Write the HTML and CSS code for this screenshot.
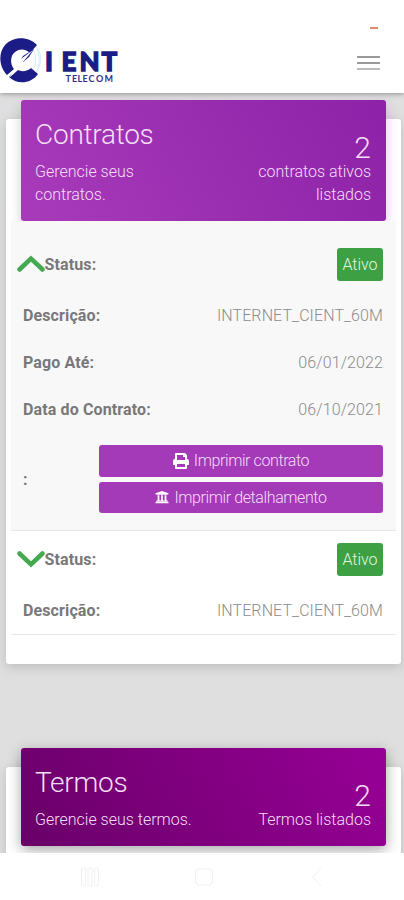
FILE: index.html
```
<!DOCTYPE html>
<html lang="pt-BR">
<head>
<meta charset="utf-8">
<meta name="viewport" content="width=device-width, initial-scale=1">
<title>Cient Telecom</title>
<link rel="stylesheet" href="styles.css">
</head>
<body>
<header class="topbar">
  <svg class="logo" width="122" height="50" viewBox="0 0 122 50" role="img" aria-label="Cient Telecom">
    <g fill="none" stroke="#d9edf5" stroke-width="1">
      <path d="M36 8Q43 21 35 38"/><path d="M38 11Q44 21 37 34"/><path d="M33 12Q39 22 32 34"/>
    </g>
    <path fill="#1c1c86" d="M37 7C29-2 13-2 5 7C-2 15-1 29 7 37L14 31C10 26 10 18 15 14C20 10 26 11 30 15Z"/>
    <path fill="#1c1c86" d="M9 39C17 47 31 46 38 36L31 30C27 34 20 34 16 31Z"/>
    <path fill="#1c1c86" d="M34 11L23 18L18 26L22 25L29 19Z"/>
    <path fill="#fff" d="M33 12L23 24L26 25L9 40L17 27L14 26Z"/>
    <text class="logo-name" y="32.500" x="45 61.500 79.500 101.500">IENT</text>
    <text class="logo-sub" y="44" x="65.500 72 77.500 82.500 88.500 96 104.500">TELECOM</text>
  </svg>
  <div class="top-actions">
    <span class="notice"></span>
    <div class="menu"><i></i><i></i><i></i></div>
  </div>
</header>
<main class="content">
  <section class="card">
    <div class="card-header">
      <h1>Contratos</h1>
      <div class="summary">
        <p>Gerencie seus<br>contratos.</p>
        <p class="count"><b>2</b>contratos ativos<br>listados</p>
      </div>
    </div>
    <div class="contract open">
      <div class="row status">
        <svg class="chevron" width="28" height="18" viewBox="0 0 28 18"><path d="M2.500 14.500L14 3.500L25.500 14.500"/></svg>
        <strong>Status:</strong><span class="badge">Ativo</span>
      </div>
      <div class="row"><strong>Descrição:</strong><span class="value plan">INTERNET_CIENT_60M</span></div>
      <div class="row"><strong>Pago Até:</strong><span class="value">06/01/2022</span></div>
      <div class="row"><strong>Data do Contrato:</strong><span class="value">06/10/2021</span></div>
      <div class="row actions">
        <strong>:</strong>
        <div class="buttons">
          <a class="button"><svg width="16" height="16" viewBox="0 0 512 512"><path d="M448 192V77.300c0-8.500-3.400-16.600-9.400-22.600L393.400 9.400c-6-6-14.100-9.400-22.600-9.400H96C78.300 0 64 14.300 64 32v160c-35.300 0-64 28.700-64 64v112c0 8.800 7.200 16 16 16h48v96c0 17.700 14.300 32 32 32h320c17.700 0 32-14.300 32-32v-96h48c8.800 0 16-7.200 16-16V256c0-35.300-28.700-64-64-64zm-64 256H128v-96h256v96zm0-224H128V64h192v48c0 8.800 7.200 16 16 16h48v96z"/></svg><span>Imprimir contrato</span></a>
          <a class="button"><svg width="14" height="14" viewBox="0 0 512 512"><path d="M496 128v16a8 8 0 0 1-8 8h-24v12c0 6.600-5.400 12-12 12H60c-6.600 0-12-5.400-12-12v-12H24a8 8 0 0 1-8-8v-16a8 8 0 0 1 5-7.400l232-88a8 8 0 0 1 6 0l232 88a8 8 0 0 1 5 7.400zm-24 304H40c-13.300 0-24 10.700-24 24v16a8 8 0 0 0 8 8h464a8 8 0 0 0 8-8v-16c0-13.300-10.700-24-24-24zM96 192v192H60c-6.600 0-12 5.400-12 12v20h416v-20c0-6.600-5.400-12-12-12h-36V192h-64v192h-64V192h-64v192h-64V192z"/></svg><span>Imprimir detalhamento</span></a>
        </div>
      </div>
    </div>
    <div class="contract">
      <div class="row status">
        <svg class="chevron" width="28" height="18" viewBox="0 0 28 18"><path d="M2.500 3.500L14 14.500L25.500 3.500"/></svg>
        <strong>Status:</strong><span class="badge">Ativo</span>
      </div>
      <div class="row"><strong>Descrição:</strong><span class="value plan">INTERNET_CIENT_60M</span></div>
    </div>
  </section>
  <section class="card terms">
    <div class="card-header">
      <h1>Termos</h1>
      <div class="summary">
        <p>Gerencie seus termos.</p>
        <p class="count"><b>2</b>Termos listados</p>
      </div>
    </div>
  </section>
</main>
<nav class="system-nav">
  <svg width="20" height="20" viewBox="0 0 20 20"><rect x="1.500" y="1" width="4" height="18" rx="1"/><rect x="8" y="1" width="4" height="18" rx="1"/><rect x="14.500" y="1" width="4" height="18" rx="2"/></svg>
  <svg width="20" height="20" viewBox="0 0 20 20"><rect x="1.500" y="2" width="17" height="16" rx="4"/></svg>
  <svg width="20" height="20" viewBox="0 0 20 20"><path d="M13 1L5 10L13 19"/></svg>
</nav>
</body>
</html>
```
FILE: styles.css
```
* { box-sizing: border-box; }
body {
  margin: 0;
  height: 900px;
  display: flex;
  flex-direction: column;
  overflow: hidden;
  background: #fff;
  color: #707070;
  font: 300 16px/23px Roboto, sans-serif;
}
.topbar {
  height: 93px;
  flex: none;
  display: flex;
  justify-content: space-between;
  padding: 26px 24px 0 0;
  background: #fff;
  box-shadow: 0 1px 5px rgba(0, 0, 0, .35);
  position: relative;
  z-index: 1;
}
.logo { margin-top: 12px; }
.logo-name { font: 900 26px Lato, sans-serif; fill: #1c1c86; stroke: #1c1c86; stroke-width: 1.3px; }
.logo-sub { font: 700 9px Lato, sans-serif; fill: #30308e; }
.top-actions { display: flex; flex-direction: column; align-items: flex-end; }
.notice { width: 8px; height: 2px; margin: 1px 2px 0 0; background: #e58a6b; }
.menu { display: grid; gap: 4px; width: 23px; margin-top: 27px; }
.menu i { height: 2px; background: #999; }
.menu i:last-child { background: #bbb; }
.content {
  height: 760px;
  flex: none;
  overflow: hidden;
  padding: 26px 3.500px 0 6px;
  background: #dfdfdf;
}
.card {
  height: 545px;
  padding: 0 5px;
  background: #fff;
  border-radius: 3px;
  box-shadow: 0 3px 12px rgba(0, 0, 0, .16);
  display: flow-root;
}
.card-header {
  height: 120.500px;
  margin: -19px 9.500px 0;
  padding: 19px 15px 0 14.500px;
  color: #f4dff7;
  background: linear-gradient(60deg, #a83bba, #8d22a8);
  border-radius: 3px;
  box-shadow: 0 5px 12px rgba(156, 39, 176, .28);
}
h1 { margin: 0; font-weight: 300; font-size: 28px; line-height: 32px; letter-spacing: -.25px; }
.summary { display: flex; justify-content: space-between; align-items: flex-end; height: 55px; }
.summary p { margin: 0; }
.count { text-align: right; }
.count b { display: block; font-weight: 300; font-size: 30px; line-height: 24px; }
.contract { border-bottom: 1px solid #e8e8e8; }
.open { height: 310px; background: #f8f8f8; }
.row {
  display: flex;
  align-items: center;
  justify-content: space-between;
  height: 46.700px;
  padding: 0 12.500px 0 12px;
}
.row strong { font-weight: 700; letter-spacing: .12px; color: #787878; }
.value { color: #8c8c8c; letter-spacing: .1px; }
.plan { letter-spacing: .1px; }
.status { height: 57px; padding-left: 5.500px; }
.open .status { height: 72px; padding-top: 15px; }
.status strong { margin-right: auto; }
.chevron { fill: none; stroke: #45a950; stroke-width: 4.500; stroke-linecap: round; }
.badge {
  width: 46px;
  height: 33px;
  display: grid;
  place-items: center;
  color: #e4f6e4;
  background: #3da143;
  border-radius: 3px;
}
.actions { height: 93px; }
.buttons { width: 284px; display: grid; gap: 5px; }
.button {
  height: 31.500px;
  display: flex;
  align-items: center;
  justify-content: center;
  gap: 5px;
  border-radius: 3px;
  background: #a43ab7;
  color: #f4def7;
  letter-spacing: -.4px;
}
.button svg { fill: #fff; }
.terms { height: 200px; margin-top: 103px; }
.terms .card-header {
  height: 98px;
  background: linear-gradient(60deg, #690068, #970096);
  box-shadow: 0 4px 14px rgba(0, 0, 0, .35);
}
.terms .summary { height: 32px; }
.system-nav { height: 47px; display: flex; justify-content: space-between; padding: 14px 76px 0 80px; }
.system-nav svg { fill: none; stroke: #f1f1f1; }
```
